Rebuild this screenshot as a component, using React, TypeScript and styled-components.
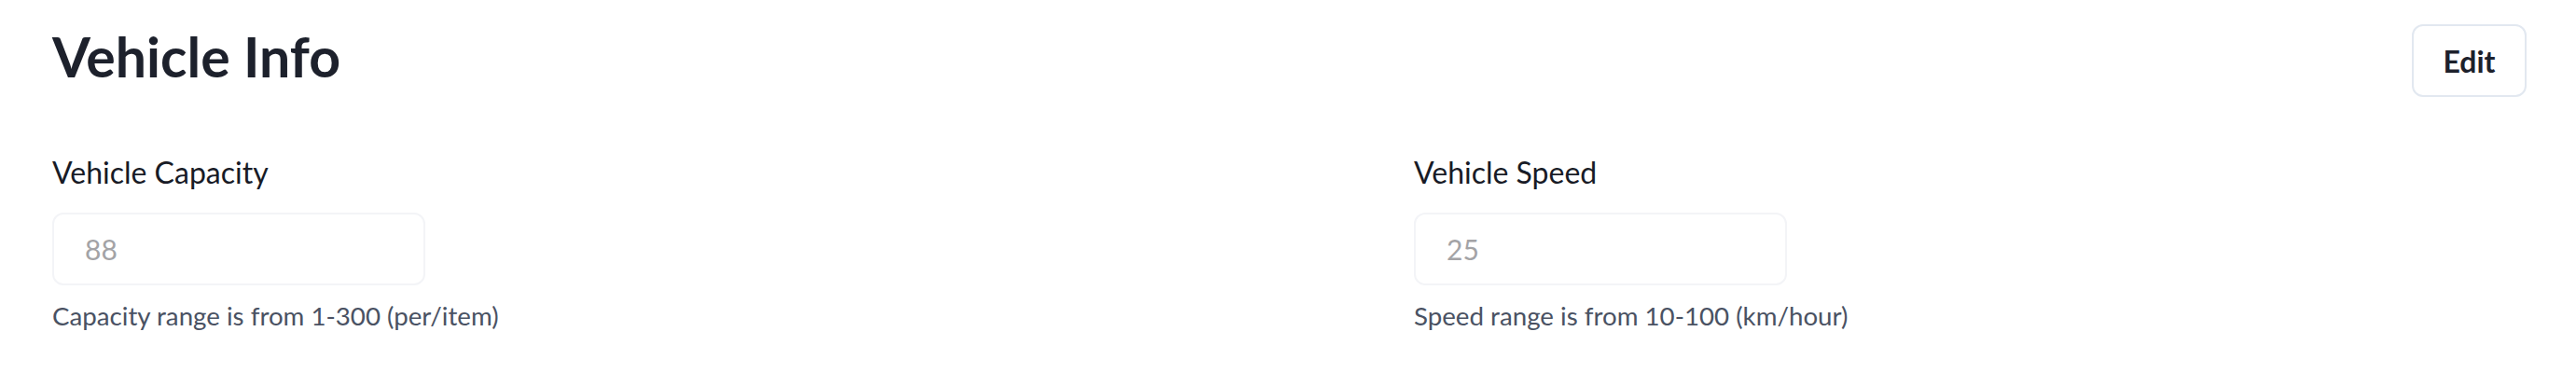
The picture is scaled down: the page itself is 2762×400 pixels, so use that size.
import React from "react";
import styled, { createGlobalStyle } from "styled-components";

const GlobalStyle = createGlobalStyle`
  html, body {
    margin: 0;
    padding: 0;
    background: #ffffff;
    font-family: Lato, "Noto Sans", sans-serif;
  }
`;

const Page = styled.div`
  padding: 0 53px 0 56px;
  box-sizing: border-box;
  width: 100%;
`;

const Header = styled.div`
  display: flex;
  justify-content: space-between;
  align-items: flex-start;
`;

const Title = styled.h1`
  margin: 25px 0 0;
  font-size: 59px;
  line-height: 72px;
  font-weight: 700;
  color: #1d212c;
`;

const EditButton = styled.button`
  margin-top: 26px;
  width: 123px;
  height: 78px;
  box-sizing: border-box;
  border: 2px solid #e2e8f0;
  border-radius: 12px;
  background: #ffffff;
  font-family: Lato, "Noto Sans", sans-serif;
  font-size: 32px;
  font-weight: 700;
  color: #1d212c;
  cursor: pointer;
`;

const Fields = styled.div`
  display: grid;
  grid-template-columns: 1460px 1fr;
  margin-top: 61px;
`;

const Field = styled.div`
  display: flex;
  flex-direction: column;
  align-items: flex-start;
`;

const Label = styled.label`
  font-size: 32px;
  line-height: 40px;
  font-weight: 400;
  color: #181b26;
`;

const Input = styled.input`
  margin-top: 23px;
  width: 400px;
  height: 78px;
  box-sizing: border-box;
  border: 2px solid #f3f4f7;
  border-radius: 12px;
  background: #ffffff;
  padding: 0 0 0 33px;
  font-family: Lato, "Noto Sans", sans-serif;
  font-size: 30px;
  color: #a3a3a6;
  outline: none;
  &:disabled {
    color: #a3a3a6;
    -webkit-text-fill-color: #a3a3a6;
    opacity: 1;
  }
`;

const Help = styled.p`
  margin: 16px 0 0;
  font-size: 27.7px;
  line-height: 34px;
  color: #4a5263;
`;

const fields = [
  { label: "Vehicle Capacity", value: "88", help: "Capacity range is from 1-300 (per/item)" },
  { label: "Vehicle Speed", value: "25", help: "Speed range is from 10-100 (km/hour)" },
];

export default function App() {
  return (
    <>
      <GlobalStyle />
      <Page>
        <Header>
          <Title>Vehicle Info</Title>
          <EditButton>Edit</EditButton>
        </Header>
        <Fields>
          {fields.map((f) => (
            <Field key={f.label}>
              <Label>{f.label}</Label>
              <Input value={f.value} disabled readOnly />
              <Help>{f.help}</Help>
            </Field>
          ))}
        </Fields>
      </Page>
    </>
  );
}
